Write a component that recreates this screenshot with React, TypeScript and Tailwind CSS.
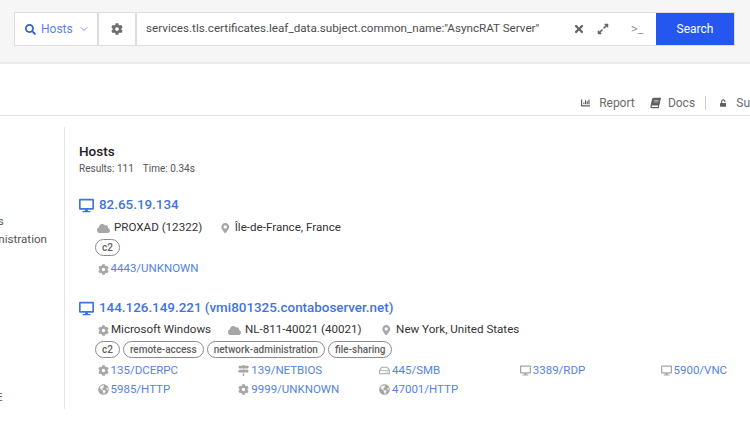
import React from "react";
import {
  FaSearch,
  FaCog,
  FaTimes,
  FaExpandAlt,
  FaChartBar,
  FaBook,
  FaUnlock,
  FaDesktop,
  FaCloud,
  FaMapMarkerAlt,
  FaGlobeAmericas,
  FaRegHdd,
  FaMapSigns,
} from "react-icons/fa";
import { FiChevronDown } from "react-icons/fi";

function Tag({ label }: { label: string }) {
  return (
    <span className="h-[17px] px-[6px] flex items-center rounded-full border border-[#8a8a8a] text-[10px] font-medium text-[#5f5f5f]">
      {label}
    </span>
  );
}

function Port({ icon, label }: { icon: React.ReactNode; label: string }) {
  return (
    <div className="flex items-center gap-[1.5px] text-[11.5px] text-[#5383e8] whitespace-nowrap">
      <span className="w-[12px] flex justify-center text-[#a6a6a6] text-[11px]">{icon}</span>
      {label}
    </div>
  );
}

export default function App() {
  return (
    <div className="w-[750px] h-[434px] overflow-hidden bg-white font-['Roboto',sans-serif]">
      <div className="h-[64px] bg-[#f6f6f6] border-b-2 border-[#ebebeb] pl-[14px] pt-[12px]">
        <div className="w-[721px] h-[34px] flex bg-white border border-[#dedede]">
          <div className="w-[84px] flex items-center pl-[10px] gap-[5px] border-r-2 border-[#dedede] text-[12px] text-[#5a7ff5]">
            <FaSearch className="text-[11px] text-[#2f5fe8]" />
            Hosts
            <FiChevronDown className="text-[12px] text-[#6f8ff0]" />
          </div>
          <div className="w-[38px] flex items-center justify-center border-r-2 border-[#dedede] text-[12px] text-[#6e6e6e]">
            <FaCog />
          </div>
          <div className="flex-1 flex items-center pl-[9px] text-[11.67px] text-[#4d4d4d] whitespace-nowrap">
            <span className="w-[425px]">services.tls.certificates.leaf_data.subject.common_name:"AsyncRAT Server"</span>
            <FaTimes className="ml-[2px] text-[12px] text-[#666666]" />
            <FaExpandAlt className="ml-[12px] text-[12px] text-[#666666]" />
            <span className="ml-[22px] text-[13px] font-light text-[#777777]">&gt;_</span>
          </div>
          <div className="w-[78px] flex items-center justify-center bg-[#2557f0] text-[12px] text-white">
            Search
          </div>
        </div>
      </div>

      <div className="h-[52px] border-b border-[#e3e3e3] flex items-end justify-end pb-[3px] text-[12px] text-[#6a6a6a] whitespace-nowrap">
        <div className="w-[169px] flex items-center">
          <FaChartBar className="text-[14px] text-[#5f5f5f]" />
          <span className="ml-[9px]">Report</span>
          <FaBook className="ml-[16px] text-[14px] -skew-x-12 text-[#5f5f5f]" />
          <span className="ml-[8px]">Docs</span>
          <span className="ml-[10px] w-px h-[14px] bg-[#cfcfcf]" />
          <FaUnlock className="ml-[14px] text-[10px] text-[#5f5f5f]" />
          <span className="ml-[10px]">Su</span>
        </div>
      </div>

      <div className="flex mt-[11px] h-[282px]">
        <div className="w-[65px] shrink-0 border-r border-[#e6e6e6] overflow-hidden flex flex-col items-end pr-[17px] pt-[86px] text-[11.6px] text-[#555555] whitespace-nowrap">
          <div className="h-[18px] w-[47px] flex justify-start"><span className="-ml-[40px]">Services</span></div>
          <div className="h-[18px]">Remote Administration</div>
          <div className="w-[47px] mt-[140px] flex justify-start"><span className="-ml-[4px]">E</span></div>
        </div>

        <div className="flex-1 pl-[14px] pt-[15px] text-[11.6px] text-[#333333] whitespace-nowrap">
          <div className="text-[13.5px] leading-[18px] font-medium text-[#222222]">Hosts</div>
          <div className="flex gap-[9px] text-[10px] leading-[14px] mt-[2px] text-[#555555]">
            <span>Results: 111</span>
            <span>Time: 0.34s</span>
          </div>

          <div className="flex items-center gap-[5px] mt-[20px] h-[18px] text-[13.4px] font-medium text-[#3f74e0]">
            <FaDesktop className="text-[15px]" />
            82.65.19.134
          </div>
          <div className="flex items-center ml-[18px] mt-[6px] h-[16px]">
            <FaCloud className="text-[13px] text-[#a6a6a6]" />
            <span className="ml-[4px]">PROXAD (12322)</span>
            <FaMapMarkerAlt className="ml-[18px] text-[10.5px] text-[#a6a6a6]" />
            <span className="ml-[4px]">Île-de-France, France</span>
          </div>
          <div className="flex ml-[16px] mt-[3px]">
            <Tag label="c2" />
          </div>
          <div className="ml-[18px] mt-[5px] h-[16px] flex items-center">
            <Port icon={<FaCog />} label="4443/UNKNOWN" />
          </div>

          <div className="flex items-center gap-[5px] mt-[22px] h-[18px] text-[13.4px] font-medium text-[#3f74e0]">
            <FaDesktop className="text-[15px]" />
            144.126.149.221 (vmi801325.contaboserver.net)
          </div>
          <div className="flex items-center ml-[18px] mt-[5px] h-[16px]">
            <FaCog className="text-[11px] text-[#a6a6a6] ml-[1px]" />
            <span className="ml-[2px]">Microsoft Windows</span>
            <FaCloud className="ml-[17px] text-[13px] text-[#a6a6a6]" />
            <span className="ml-[4px]">NL-811-40021 (40021)</span>
            <FaMapMarkerAlt className="ml-[19px] text-[10.5px] text-[#a6a6a6]" />
            <span className="ml-[5px]">New York, United States</span>
          </div>
          <div className="flex gap-[3px] ml-[16px] mt-[3px]">
            <Tag label="c2" />
            <Tag label="remote-access" />
            <Tag label="network-administration" />
            <Tag label="file-sharing" />
          </div>
          <div className="grid grid-cols-[140.75px_140.75px_140.75px_140.75px_auto] ml-[18px] mt-[3px] auto-rows-[19px] items-center">
            <Port icon={<FaCog />} label="135/DCERPC" />
            <Port icon={<FaMapSigns />} label="139/NETBIOS" />
            <Port icon={<FaRegHdd />} label="445/SMB" />
            <Port icon={<FaDesktop />} label="3389/RDP" />
            <Port icon={<FaDesktop />} label="5900/VNC" />
            <Port icon={<FaGlobeAmericas />} label="5985/HTTP" />
            <Port icon={<FaCog />} label="9999/UNKNOWN" />
            <Port icon={<FaGlobeAmericas />} label="47001/HTTP" />
          </div>
        </div>
      </div>
    </div>
  );
}
